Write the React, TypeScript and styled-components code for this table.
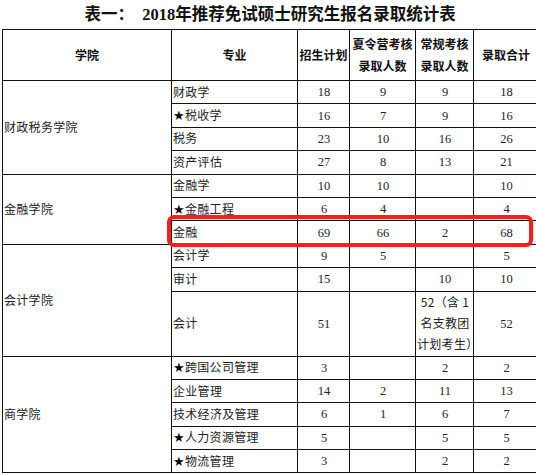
import React from "react";
import styled, { createGlobalStyle } from "styled-components";

const Global = createGlobalStyle`
  html, body { margin: 0; padding: 0; background: #fff; overflow: hidden; }
  body { font-family: "Liberation Serif", "Noto Sans CJK SC", serif; color: #1a1a1a; }
`;

const Page = styled.div`
  position: relative;
  width: 536px;
  height: 475px;
  padding-left: 2px;
  box-sizing: border-box;
`;

const Title = styled.h1`
  margin: 0;
  height: 29px;
  line-height: 29px;
  font-size: 16.5px;
  font-weight: 700;
  text-align: center;
  white-space: pre;
  color: #111;
  padding-left: 2px;
`;

const Table = styled.table`
  border-collapse: collapse;
  table-layout: fixed;
  width: 536px;
  font-size: 12px;
`;

const Th = styled.th`
  border: 1px solid #111;
  height: 50px;
  padding: 0;
  font-family: "Noto Sans CJK SC", sans-serif;
  font-weight: 700;
  font-size: 12px;
  line-height: 22px;
  text-align: center;
  vertical-align: middle;
  color: #111;
`;

const Td = styled.td<{ $align?: "left" | "center"; $tall?: boolean; $soft?: boolean }>`
  border: 1px solid #111;
  border-top-color: ${(p) => (p.$soft ? "#777" : "#111")};
  height: ${(p) => (p.$tall ? "64px" : "22.4px")};
  padding: 0 0 0 1px;
  text-align: ${(p) => p.$align ?? "center"};
  vertical-align: middle;
  line-height: 20px;
  font-size: 12.5px;
  color: #1e1e2a;
  white-space: nowrap;
`;

const Major = styled.span`
  font-family: "Noto Sans CJK SC", sans-serif;
  font-size: 12px;
  letter-spacing: 0.3px;
  color: #222;
`;

const College = styled(Major)``;

const Star = styled.span`
  display: inline-block;
  width: 12px;
  font-family: "DejaVu Sans", sans-serif;
  font-size: 13px;
  line-height: 1;
  color: #000;
  letter-spacing: 0;
`;

const RedBox = styled.div`
  position: absolute;
  left: 167px;
  top: 215px;
  width: 366px;
  height: 32px;
  border: 4px solid #ff1c1c;
  border-radius: 7px;
  box-sizing: border-box;
  pointer-events: none;
`;

type Row = {
  major: string;
  star?: boolean;
  plan: string;
  summer: string;
  regular: React.ReactNode;
  total: string;
  tall?: boolean;
  soft?: boolean;
};

type Group = { college: string; rows: Row[] };

const data: Group[] = [
  {
    college: "财政税务学院",
    rows: [
      { major: "财政学", plan: "18", summer: "9", regular: "9", total: "18" },
      { major: "税收学", star: true, plan: "16", summer: "7", regular: "9", total: "16", soft: true },
      { major: "税务", plan: "23", summer: "10", regular: "16", total: "26" },
      { major: "资产评估", plan: "27", summer: "8", regular: "13", total: "21" },
    ],
  },
  {
    college: "金融学院",
    rows: [
      { major: "金融学", plan: "10", summer: "10", regular: "", total: "10" },
      { major: "金融工程", star: true, plan: "6", summer: "4", regular: "", total: "4" },
      { major: "金融", plan: "69", summer: "66", regular: "2", total: "68" },
    ],
  },
  {
    college: "会计学院",
    rows: [
      { major: "会计学", plan: "9", summer: "5", regular: "", total: "5" },
      { major: "审计", plan: "15", summer: "", regular: "10", total: "10", soft: true },
      {
        major: "会计",
        plan: "51",
        summer: "",
        regular: (
          <>
            52（含 1
            <br />
            名支教团
            <br />
            计划考生）
          </>
        ),
        total: "52",
        tall: true,
      },
    ],
  },
  {
    college: "商学院",
    rows: [
      { major: "跨国公司管理", star: true, plan: "3", summer: "", regular: "2", total: "2" },
      { major: "企业管理", plan: "14", summer: "2", regular: "11", total: "13", soft: true },
      { major: "技术经济及管理", plan: "6", summer: "1", regular: "6", total: "7" },
      { major: "人力资源管理", star: true, plan: "5", summer: "", regular: "5", total: "5", soft: true },
      { major: "物流管理", star: true, plan: "3", summer: "", regular: "2", total: "2" },
    ],
  },
];

export default function App() {
  return (
    <>
      <Global />
      <Page>
        <Title>{"表一：  2018年推荐免试硕士研究生报名录取统计表"}</Title>
        <Table>
          <colgroup>
            <col style={{ width: 169 }} />
            <col style={{ width: 126 }} />
            <col style={{ width: 52 }} />
            <col style={{ width: 66 }} />
            <col style={{ width: 58 }} />
            <col style={{ width: 65 }} />
          </colgroup>
          <thead>
            <tr>
              <Th>学院</Th>
              <Th>专业</Th>
              <Th>招生计划</Th>
              <Th>
                夏令营考核
                <br />
                录取人数
              </Th>
              <Th>
                常规考核
                <br />
                录取人数
              </Th>
              <Th>录取合计</Th>
            </tr>
          </thead>
          <tbody>
            {data.map((g) =>
              g.rows.map((r, i) => (
                <tr key={g.college + r.major}>
                  {i === 0 && (
                    <Td $align="left" rowSpan={g.rows.length}>
                      <College>{g.college}</College>
                    </Td>
                  )}
                  <Td $align="left" $tall={r.tall} $soft={r.soft}>
                    <Major>
                      {r.star && <Star>★</Star>}
                      {r.major}
                    </Major>
                  </Td>
                  <Td $soft={r.soft}>{r.plan}</Td>
                  <Td $soft={r.soft}>{r.summer}</Td>
                  <Td $soft={r.soft} style={r.tall ? { whiteSpace: "normal" } : undefined}>
                    {typeof r.regular === "string" ? r.regular : <Major>{r.regular}</Major>}
                  </Td>
                  <Td $soft={r.soft}>{r.total}</Td>
                </tr>
              ))
            )}
          </tbody>
        </Table>
        <RedBox />
      </Page>
    </>
  );
}
